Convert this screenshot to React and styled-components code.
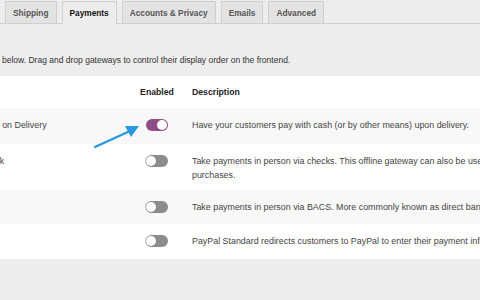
import React from "react";
import styled, { createGlobalStyle } from "styled-components";

const Global = createGlobalStyle`
  html, body { margin: 0; padding: 0; }
  body {
    background: #ededed;
    font-family: "Liberation Sans", Arial, sans-serif;
    color: #32373c;
    width: 480px;
    height: 300px;
    overflow: hidden;
  }
`;

const Page = styled.div`
  position: relative;
  width: 480px;
  height: 300px;
  overflow: hidden;
`;

const TabBar = styled.nav`
  display: flex;
  gap: 5px;
  padding: 1px 0 0 5px;
  height: 22px;
  border-bottom: 1px solid #cfcfcf;
`;

const Tab = styled.div`
  display: flex;
  align-items: center;
  padding: 0 7px;
  font-size: 8.3px;
  font-weight: bold;
  white-space: nowrap;
  border: 1px solid #cfcfcf;
  border-bottom: none;
  background: ${(p) => (p.$active ? "#ededed" : "#e3e3e3")};
  color: ${(p) => (p.$active ? "#111" : "#555")};
  margin-bottom: ${(p) => (p.$active ? "-1px" : "0")};
  height: ${(p) => (p.$active ? "23px" : "22px")};
  box-sizing: border-box;
`;

const Intro = styled.p`
  margin: 0;
  padding: 31px 0 0 2px;
  height: 21px;
  font-size: 8.5px;
  color: #333;
  white-space: nowrap;
`;

const Table = styled.table`
  margin-left: -23px;
  width: 580px;
  border-collapse: collapse;
  background: #fff;
  table-layout: fixed;
`;

const Th = styled.th`
  height: 32px;
  padding: 0;
  text-align: ${(p) => p.$align || "left"};
  font-size: 8.7px;
  font-weight: bold;
  color: #222;
  padding-left: ${(p) => p.$pl || "0"};
  box-sizing: border-box;
`;

const Row = styled.tr`
  background: ${(p) => (p.$striped ? "#f8f8f8" : "#fff")};
  height: ${(p) => p.$h}px;
`;

const Td = styled.td`
  padding: 10px 0 0;
  padding-left: ${(p) => p.$pl || "0"};
  text-align: ${(p) => p.$align || "left"};
  font-size: 8.9px;
  line-height: 14px;
  color: #444;
  vertical-align: top;
  white-space: ${(p) => (p.$nowrap ? "nowrap" : "normal")};
  overflow: hidden;
  box-sizing: border-box;
`;

const Toggle = styled.span`
  display: inline-block;
  vertical-align: top;
  position: relative;
  margin-top: 1px;
  width: 22px;
  height: 12px;
  border-radius: 6px;
  background: ${(p) => (p.$on ? "#8e4d84" : "#8c8c8c")};
  &::after {
    content: "";
    position: absolute;
    top: 1px;
    ${(p) => (p.$on ? "right: 1px;" : "left: 0px;")}
    width: 10px;
    height: 10px;
    border-radius: 50%;
    background: #fff;
    box-shadow: ${(p) => (p.$on ? "none" : "0 0 0 0.7px #888")};
  }
`;

const Arrow = styled.svg`
  position: absolute;
  left: 90px;
  top: 120px;
  width: 55px;
  height: 35px;
`;

const rows = [
  { name: "Cash on Delivery", on: true, h: 36, striped: true, desc: "Have your customers pay with cash (or by other means) upon delivery." },
  { name: "Check", on: false, h: 46, striped: false, desc: "Take payments in person via checks. This offline gateway can also be useful to test purchases." },
  { name: "", on: false, h: 34, striped: true, desc: "Take payments in person via BACS. More commonly known as direct bank/wire transfer." },
  { name: "", on: false, h: 35, striped: false, desc: "PayPal Standard redirects customers to PayPal to enter their payment information." },
];

export default function App() {
  return (
    <Page>
      <Global />
      <TabBar>
        <Tab>Shipping</Tab>
        <Tab $active>Payments</Tab>
        <Tab>Accounts &amp; Privacy</Tab>
        <Tab>Emails</Tab>
        <Tab>Advanced</Tab>
      </TabBar>
      <Intro>below. Drag and drop gateways to control their display order on the frontend.</Intro>
      <Table>
        <colgroup>
          <col style={{ width: 155 }} />
          <col style={{ width: 50 }} />
          <col style={{ width: 375 }} />
        </colgroup>
        <thead>
          <tr>
            <Th />
            <Th $align="center">Enabled</Th>
            <Th $pl="10px">Description</Th>
          </tr>
        </thead>
        <tbody>
          {rows.map((r, i) => (
            <Row key={i} $striped={r.striped} $h={r.h}>
              <Td $pl="2px" $nowrap>{r.name}</Td>
              <Td $align="center">
                <Toggle $on={r.on} />
              </Td>
              <Td $pl="10px">{r.desc}</Td>
            </Row>
          ))}
        </tbody>
      </Table>
      <Arrow viewBox="0 0 55 35">
        <line x1="5" y1="27" x2="40" y2="11" stroke="#2a98df" strokeWidth="2.4" strokeLinecap="round" />
        <polygon points="49,6 35,6 41,17" fill="#2a98df" />
      </Arrow>
    </Page>
  );
}
